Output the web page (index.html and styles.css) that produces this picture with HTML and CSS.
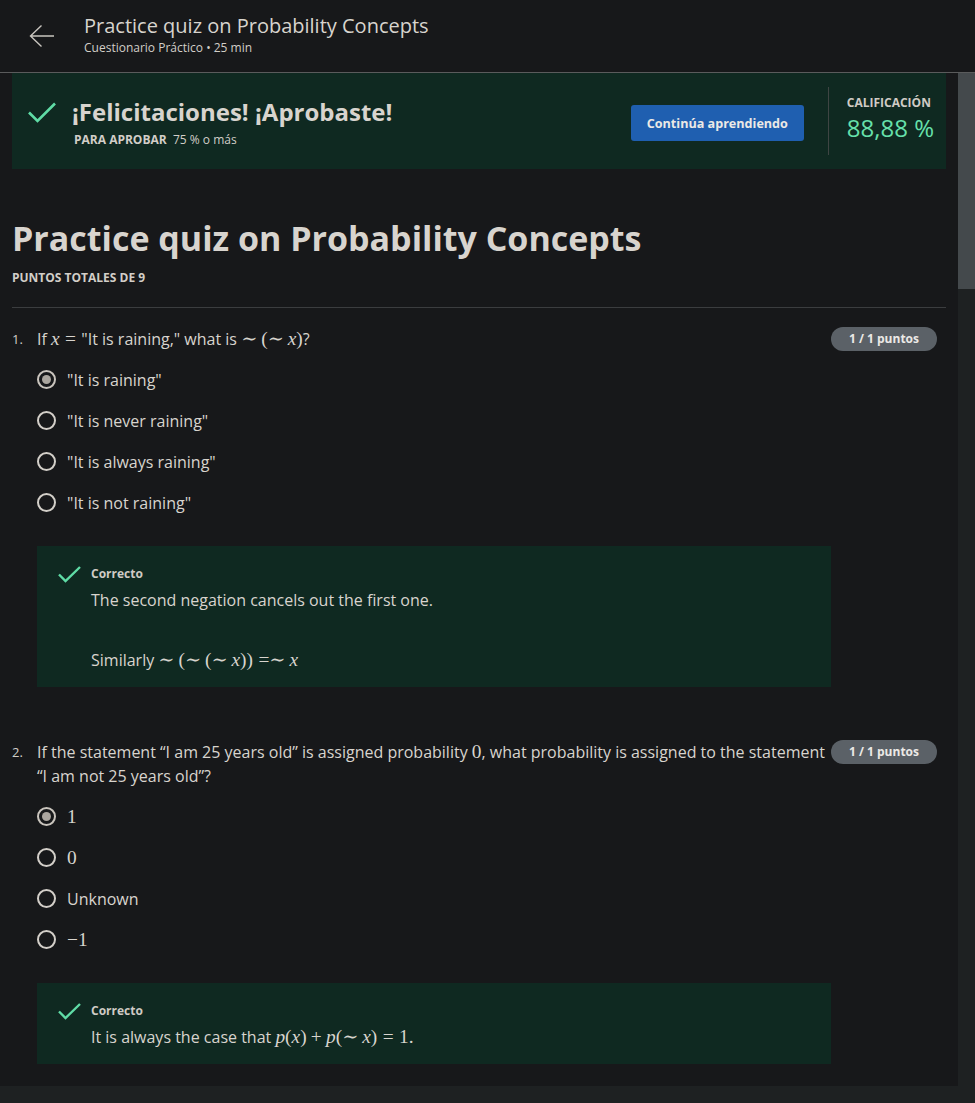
FILE: index.html
```html
<!DOCTYPE html>
<html lang="es">
<head>
<meta charset="utf-8">
<title>Practice quiz on Probability Concepts</title>
<link rel="stylesheet" href="styles.css">
</head>
<body>
<header class="topbar">
  <svg class="back" width="26" height="24" viewBox="0 0 26 24"><path d="M25 12H2M12.5 1.5L1.5 12L12.5 22.5" fill="none" stroke="#c9c5bf" stroke-width="1.4"/></svg>
  <div class="head-text">
    <div class="head-title">Practice quiz on Probability Concepts</div>
    <div class="head-sub">Cuestionario Práctico • 25 min</div>
  </div>
</header>
<div class="page">
  <main class="content">
    <div class="inner">
      <section class="banner">
        <svg class="banner-check" width="28" height="21" viewBox="0 0 28 21"><path d="M1 10.5L9.5 19L27 1.5" fill="none" stroke="#5fdca6" stroke-width="2.6"/></svg>
        <div class="banner-text">
          <div class="banner-title">¡Felicitaciones! ¡Aprobaste!</div>
          <div class="banner-sub"><b>PARA APROBAR</b>&nbsp; 75 % o más</div>
        </div>
        <button class="cta">Continúa aprendiendo</button>
        <div class="divider"></div>
        <div class="grade">
          <div class="grade-label">CALIFICACIÓN</div>
          <div class="grade-value">88,88 %</div>
        </div>
      </section>

      <h1 class="quiz-title">Practice quiz on Probability Concepts</h1>
      <div class="total">PUNTOS TOTALES DE 9</div>
      <hr class="rule">

      <section class="question">
        <div class="q-row">
          <span class="q-num">1.</span>
          <div class="q-text">If <span class="m"><i>x</i><span class="rel">=</span></span>"It is raining," what is <span class="m">∼<span class="sp"></span>(∼<span class="sp"></span><i>x</i>)</span>?</div>
          <span class="badge">1 / 1 puntos</span>
        </div>
        <ul class="options">
          <li class="opt"><span class="radio checked"></span><span>"It is raining"</span></li>
          <li class="opt"><span class="radio"></span><span>"It is never raining"</span></li>
          <li class="opt"><span class="radio"></span><span>"It is always raining"</span></li>
          <li class="opt"><span class="radio"></span><span>"It is not raining"</span></li>
        </ul>
        <div class="feedback">
          <svg class="fb-check" width="23" height="17" viewBox="0 0 23 17"><path d="M1 8.5L7.5 15L22 1" fill="none" stroke="#5fdca6" stroke-width="2.4"/></svg>
          <div class="fb-body">
            <div class="fb-label">Correcto</div>
            <p class="fb-p">The second negation cancels out the first one.</p>
            <p class="fb-p gap">Similarly <span class="m">∼<span class="sp"></span>(∼<span class="sp"></span>(∼<span class="sp"></span><i>x</i>))<span class="rel-l">=</span>∼<span class="sp"></span><i>x</i></span></p>
          </div>
        </div>
      </section>

      <section class="question">
        <div class="q-row">
          <span class="q-num">2.</span>
          <div class="q-text"><span>If the statement “I am 25 years old” is assigned probability</span> <span class="m">0</span><span>, what probability is assigned to the statement</span> <span>“I am not 25 years old”?</span></div>
          <span class="badge">1 / 1 puntos</span>
        </div>
        <ul class="options">
          <li class="opt"><span class="radio checked"></span><span class="m">1</span></li>
          <li class="opt"><span class="radio"></span><span class="m">0</span></li>
          <li class="opt"><span class="radio"></span><span>Unknown</span></li>
          <li class="opt"><span class="radio"></span><span class="m">−1</span></li>
        </ul>
        <div class="feedback">
          <svg class="fb-check" width="23" height="17" viewBox="0 0 23 17"><path d="M1 8.5L7.5 15L22 1" fill="none" stroke="#5fdca6" stroke-width="2.4"/></svg>
          <div class="fb-body">
            <div class="fb-label">Correcto</div>
            <p class="fb-p">It is always the case that <span class="m"><i>p</i>(<i>x</i>)<span class="bin">+</span><i>p</i>(∼<span class="sp"></span><i>x</i>)<span class="rel">=</span>1.</span></p>
          </div>
        </div>
      </section>
    </div>
    <div class="footer-band"></div>
  </main>
  <div class="scrollbar"><div class="thumb"></div></div>
</div>
</body>
</html>
```

FILE: styles.css
```css
* { box-sizing: border-box; }
html, body { margin: 0; padding: 0; height: 100%; }
body {
  background: #17181a;
  color: #d8d4ce;
  font-family: "Open Sans", "Noto Sans", sans-serif;
  overflow: hidden;
}

/* Top bar */
.topbar {
  height: 73px;
  border-bottom: 1px solid #5a5b5c;
  display: flex;
  align-items: flex-start;
  padding: 13px 0 0 29px;
}
.back { margin-top: 11px; margin-right: 29px; flex: none; }
.head-title { font-size: 20px; line-height: 26px; color: #d8d4ce; }
.head-sub { font-size: 12px; line-height: 16px; margin-top: 1px; color: #d2cec8; }

/* Page */
.page { display: flex; height: calc(100% - 73px); }
.content { flex: 1; display: flex; flex-direction: column; min-width: 0; }
.inner { padding: 0 12px; }
.scrollbar { width: 17px; flex: none; background: #1e2122; }
.thumb { height: 216px; background: #44494c; }
.footer-band { margin-top: 22px; flex: 1; background: #1e2122; }

/* Banner */
.banner {
  height: 96px;
  background: #0f2921;
  display: flex;
  align-items: flex-start;
  padding: 0 12px 0 16px;
}
.banner-check { margin-top: 29px; margin-right: 16px; flex: none; }
.banner-text { flex: 1; margin-top: 24px; }
.banner-title { font-size: 24px; font-weight: 700; line-height: 30px; color: #d8d4ce; }
.banner-sub { font-size: 12px; line-height: 16px; margin-top: 5px; margin-left: 2px; color: #d2cec8; }
.banner-sub b { font-weight: 700; }
.cta {
  margin-top: 32px;
  height: 36px;
  width: 173px;
  border: none;
  border-radius: 3px;
  background: #1f5fb0;
  color: #ebe9e6;
  font-family: "Open Sans", sans-serif;
  font-size: 12.6px;
  font-weight: 700;
  padding: 0;
}
.divider { width: 1px; height: 68px; margin: 14px 18px 0 24px; background: #3e4543; }
.grade { margin-top: 22px; }
.grade-label { font-size: 12px; font-weight: 700; line-height: 16px; color: #cfcbc5; }
.grade-value { font-size: 24px; line-height: 28px; margin-top: 3px; color: #66e0ab; }

/* Title */
.quiz-title {
  margin: 47px 0 0;
  font-size: 34px;
  line-height: 44px;
  font-weight: 700;
  color: #d8d4ce;
}
.total { margin-top: 10px; font-size: 12px; font-weight: 700; line-height: 16px; color: #d2cec8; }
.rule { margin: 21px 0 0; border: none; height: 1px; background: #3b3d3f; }

/* Questions */
.question { padding: 19px 0 34px; }
.question:last-child { padding-bottom: 0; }
.q-row { display: flex; align-items: flex-start; }
.q-num { width: 25px; flex: none; font-size: 13px; line-height: 24px; color: #d2cec8; }
.q-text { flex: 1; font-size: 16px; line-height: 24px; }
.badge {
  flex: none;
  margin: 0 9px 0 5px;
  height: 24px;
  width: 106px;
  border-radius: 12px;
  background: #5b6167;
  color: #ebe9e6;
  font-size: 12px;
  font-weight: 700;
  line-height: 24px;
  text-align: center;
}
.m { font-family: "Liberation Serif", "DejaVu Serif", serif; font-size: 1.21em; line-height: 1; }
.m i { font-style: italic; }
.rel { padding: 0 0.28em; }
.rel-l { padding-left: 0.28em; }
.bin { padding: 0 0.22em; }
.sp { display: inline-block; width: 0.2em; }

.options { list-style: none; margin: 8px 0 0; padding: 0 0 0 25px; }
.opt { height: 41px; display: flex; align-items: center; font-size: 16px; }
.radio {
  width: 19px; height: 19px;
  border: 2px solid #d3cfc9;
  border-radius: 50%;
  margin-right: 11px;
  flex: none;
  display: flex; align-items: center; justify-content: center;
}
.radio.checked { border-color: #c9c4bd; }
.radio.checked::after {
  content: "";
  width: 9px; height: 9px;
  border-radius: 50%;
  background: #aaa59e;
}

.feedback {
  margin: 23px 0 0 25px;
  width: 794px;
  background: #0f2921;
  display: flex;
  align-items: flex-start;
  padding: 20px 20px 15px 21px;
}
.fb-check { flex: none; margin-right: 10px; }
.fb-body { flex: 1; }
.fb-label { font-size: 12px; font-weight: 700; line-height: 16px; color: #cfcbc5; }
.fb-p { margin: 6px 0 0; font-size: 16px; line-height: 24px; }
.fb-p.gap { margin-top: 36px; }
```
